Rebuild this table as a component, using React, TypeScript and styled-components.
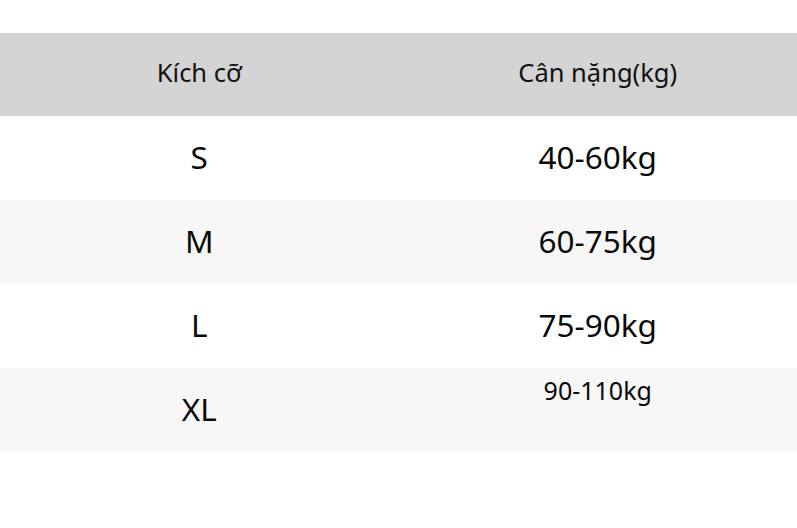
import styled, { createGlobalStyle } from "styled-components";

const GlobalStyle = createGlobalStyle`
  html, body {
    margin: 0;
    padding: 0;
    background: #ffffff;
  }
  body {
    font-family: "Noto Sans", "Open Sans", sans-serif;
    color: #111111;
  }
`;

// Bảng kích cỡ
const Page = styled.div`
  width: 797px;
  height: 528px;
  padding-top: 33px;
  box-sizing: border-box;
  background: #ffffff;
`;

const Table = styled.div`
  display: flex;
  flex-direction: column;
  width: 100%;
`;

const HeaderRow = styled.div`
  display: grid;
  grid-template-columns: 1fr 1fr;
  height: 83px;
  align-items: center;
  background: #d4d4d4;
`;

const HeaderCell = styled.div`
  text-align: center;
  font-size: 25.5px;
  line-height: 1;
  padding-bottom: 3px;
  color: #111111;
`;

const Row = styled.div<{ $alt?: boolean }>`
  display: grid;
  grid-template-columns: 1fr 1fr;
  height: 84px;
  background: ${(p) => (p.$alt ? "#f7f7f7" : "#ffffff")};
`;

const Cell = styled.div<{ $small?: boolean }>`
  display: flex;
  justify-content: center;
  align-items: ${(p) => (p.$small ? "flex-start" : "center")};
  padding-top: ${(p) => (p.$small ? "10px" : "0")};
  padding-bottom: ${(p) => (p.$small ? "0" : "3px")};
  line-height: 1;
  font-size: ${(p) => (p.$small ? "25px" : "31.5px")};
  color: #0a0a0a;
`;

const rows = [
  { size: "S", weight: "40-60kg" },
  { size: "M", weight: "60-75kg" },
  { size: "L", weight: "75-90kg" },
  { size: "XL", weight: "90-110kg", small: true },
];

export default function App() {
  return (
    <>
      <GlobalStyle />
      <Page>
        <Table>
          <HeaderRow>
            <HeaderCell>Kích cỡ</HeaderCell>
            <HeaderCell>Cân nặng(kg)</HeaderCell>
          </HeaderRow>
          {rows.map((r, i) => (
            <Row key={r.size} $alt={i % 2 === 1}>
              <Cell>{r.size}</Cell>
              <Cell $small={r.small}>{r.weight}</Cell>
            </Row>
          ))}
        </Table>
      </Page>
    </>
  );
}
